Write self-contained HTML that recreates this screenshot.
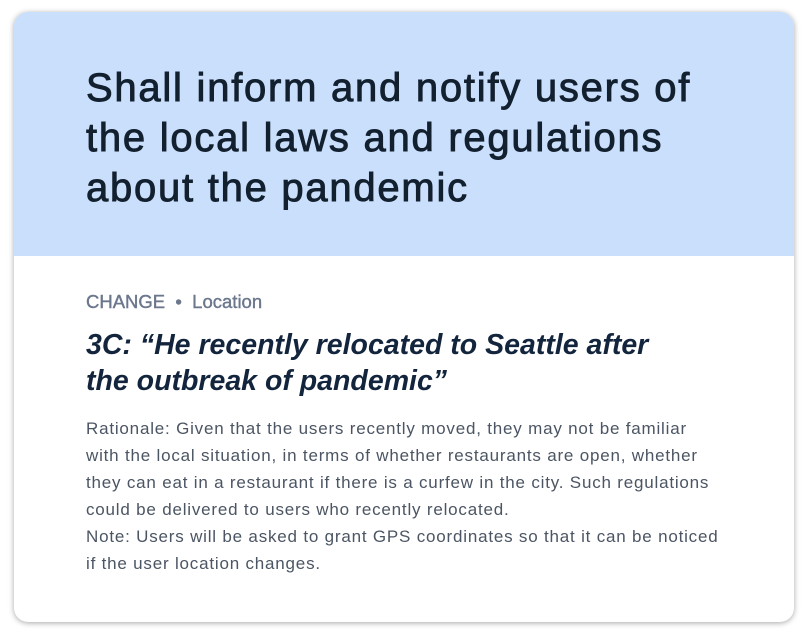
<!DOCTYPE html>
<html><head><style>
html,body{margin:0;padding:0;background:#fff;width:808px;height:638px;overflow:hidden}
body{font-family:"Liberation Sans","DejaVu Sans",sans-serif}
.card{position:absolute;left:14px;top:12px;width:780px;height:610px;border-radius:14px;background:#fff;box-shadow:0 1px 6px rgba(0,0,0,.35);overflow:hidden}
.head{height:244px;background:#c9dffb;position:relative}
.head h1{position:absolute;left:72px;top:51px;margin:0;font-weight:normal;font-size:40px;line-height:50px;color:#13202f;letter-spacing:1.75px;-webkit-text-stroke:0.9px #13202f;white-space:nowrap}
.tag{position:absolute;left:72px;top:279px;font-size:18.5px;color:#6b778c;-webkit-text-stroke:0.4px #6b778c;white-space:nowrap}
.sub{position:absolute;left:72px;top:315px;margin:0;font-size:28.5px;line-height:36px;font-style:italic;font-weight:bold;color:#13243d;white-space:nowrap}
.body{position:absolute;left:72px;top:403px;font-size:17px;line-height:27px;color:#4b5563;letter-spacing:0.8px;white-space:nowrap}
</style></head><body>
<div class="card">
<div class="head"><h1>Shall inform and notify users of<br>the local laws and regulations<br>about the pandemic</h1></div>
<div class="tag">CHANGE &nbsp;•&nbsp; Location</div>
<div class="sub">3C: “He recently relocated to Seattle after<br>the outbreak of pandemic”</div>
<div class="body">Rationale: Given that the users recently moved, they may not be familiar<br>with the local situation, in terms of whether restaurants are open, whether<br>they can eat in a restaurant if there is a curfew in the city. Such regulations<br>could be delivered to users who recently relocated.<br>Note: Users will be asked to grant GPS coordinates so that it can be noticed<br>if the user location changes.</div>
</div>
</body></html>
